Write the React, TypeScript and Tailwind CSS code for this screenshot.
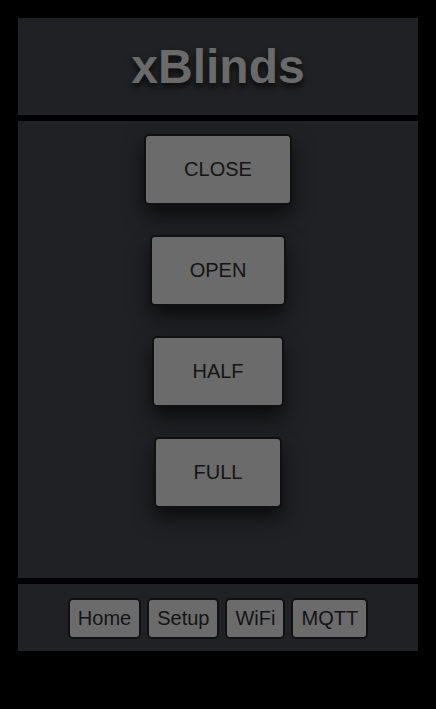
const ACTIONS = ['CLOSE', 'OPEN', 'HALF', 'FULL'];
const NAV = ['Home', 'Setup', 'WiFi', 'MQTT'];

export default function App() {
  return (
    <div
      className="min-h-[709px] w-full bg-black pt-[18px]"
      style={{ fontFamily: '"Liberation Sans", Arial, sans-serif' }}
    >
      <div className="mx-auto flex w-[400px] flex-col gap-[6px]">
        <header className="flex h-[97px] items-center justify-center bg-[#202124]">
          <h1 className="text-[48px] font-bold leading-none text-[#6a6a6a] [text-shadow:0_4px_6px_rgba(0,0,0,0.75)]">
            xBlinds
          </h1>
        </header>

        <main className="flex h-[457px] flex-col items-center gap-[30px] bg-[#202124] pt-[13px]">
          {ACTIONS.map((label) => (
            <button
              key={label}
              className="box-border h-[71px] rounded-[5px] border-2 border-[#101012] bg-[#6b6b6b] px-[38px] text-[20px] leading-[21px] text-[#141414] shadow-[0_10px_20px_rgba(0,0,0,0.65)]"
            >
              {label}
            </button>
          ))}
        </main>

        <nav className="flex h-[67px] items-center justify-center gap-[6px] bg-[#202124] pt-[2px]">
          {NAV.map((label) => (
            <button
              key={label}
              className="box-border h-[41px] rounded-[5px] border-2 border-[#101012] bg-[#6b6b6b] px-[8px] text-[20px] leading-[23px] text-[#141414]"
            >
              {label}
            </button>
          ))}
        </nav>
      </div>
    </div>
  );
}
